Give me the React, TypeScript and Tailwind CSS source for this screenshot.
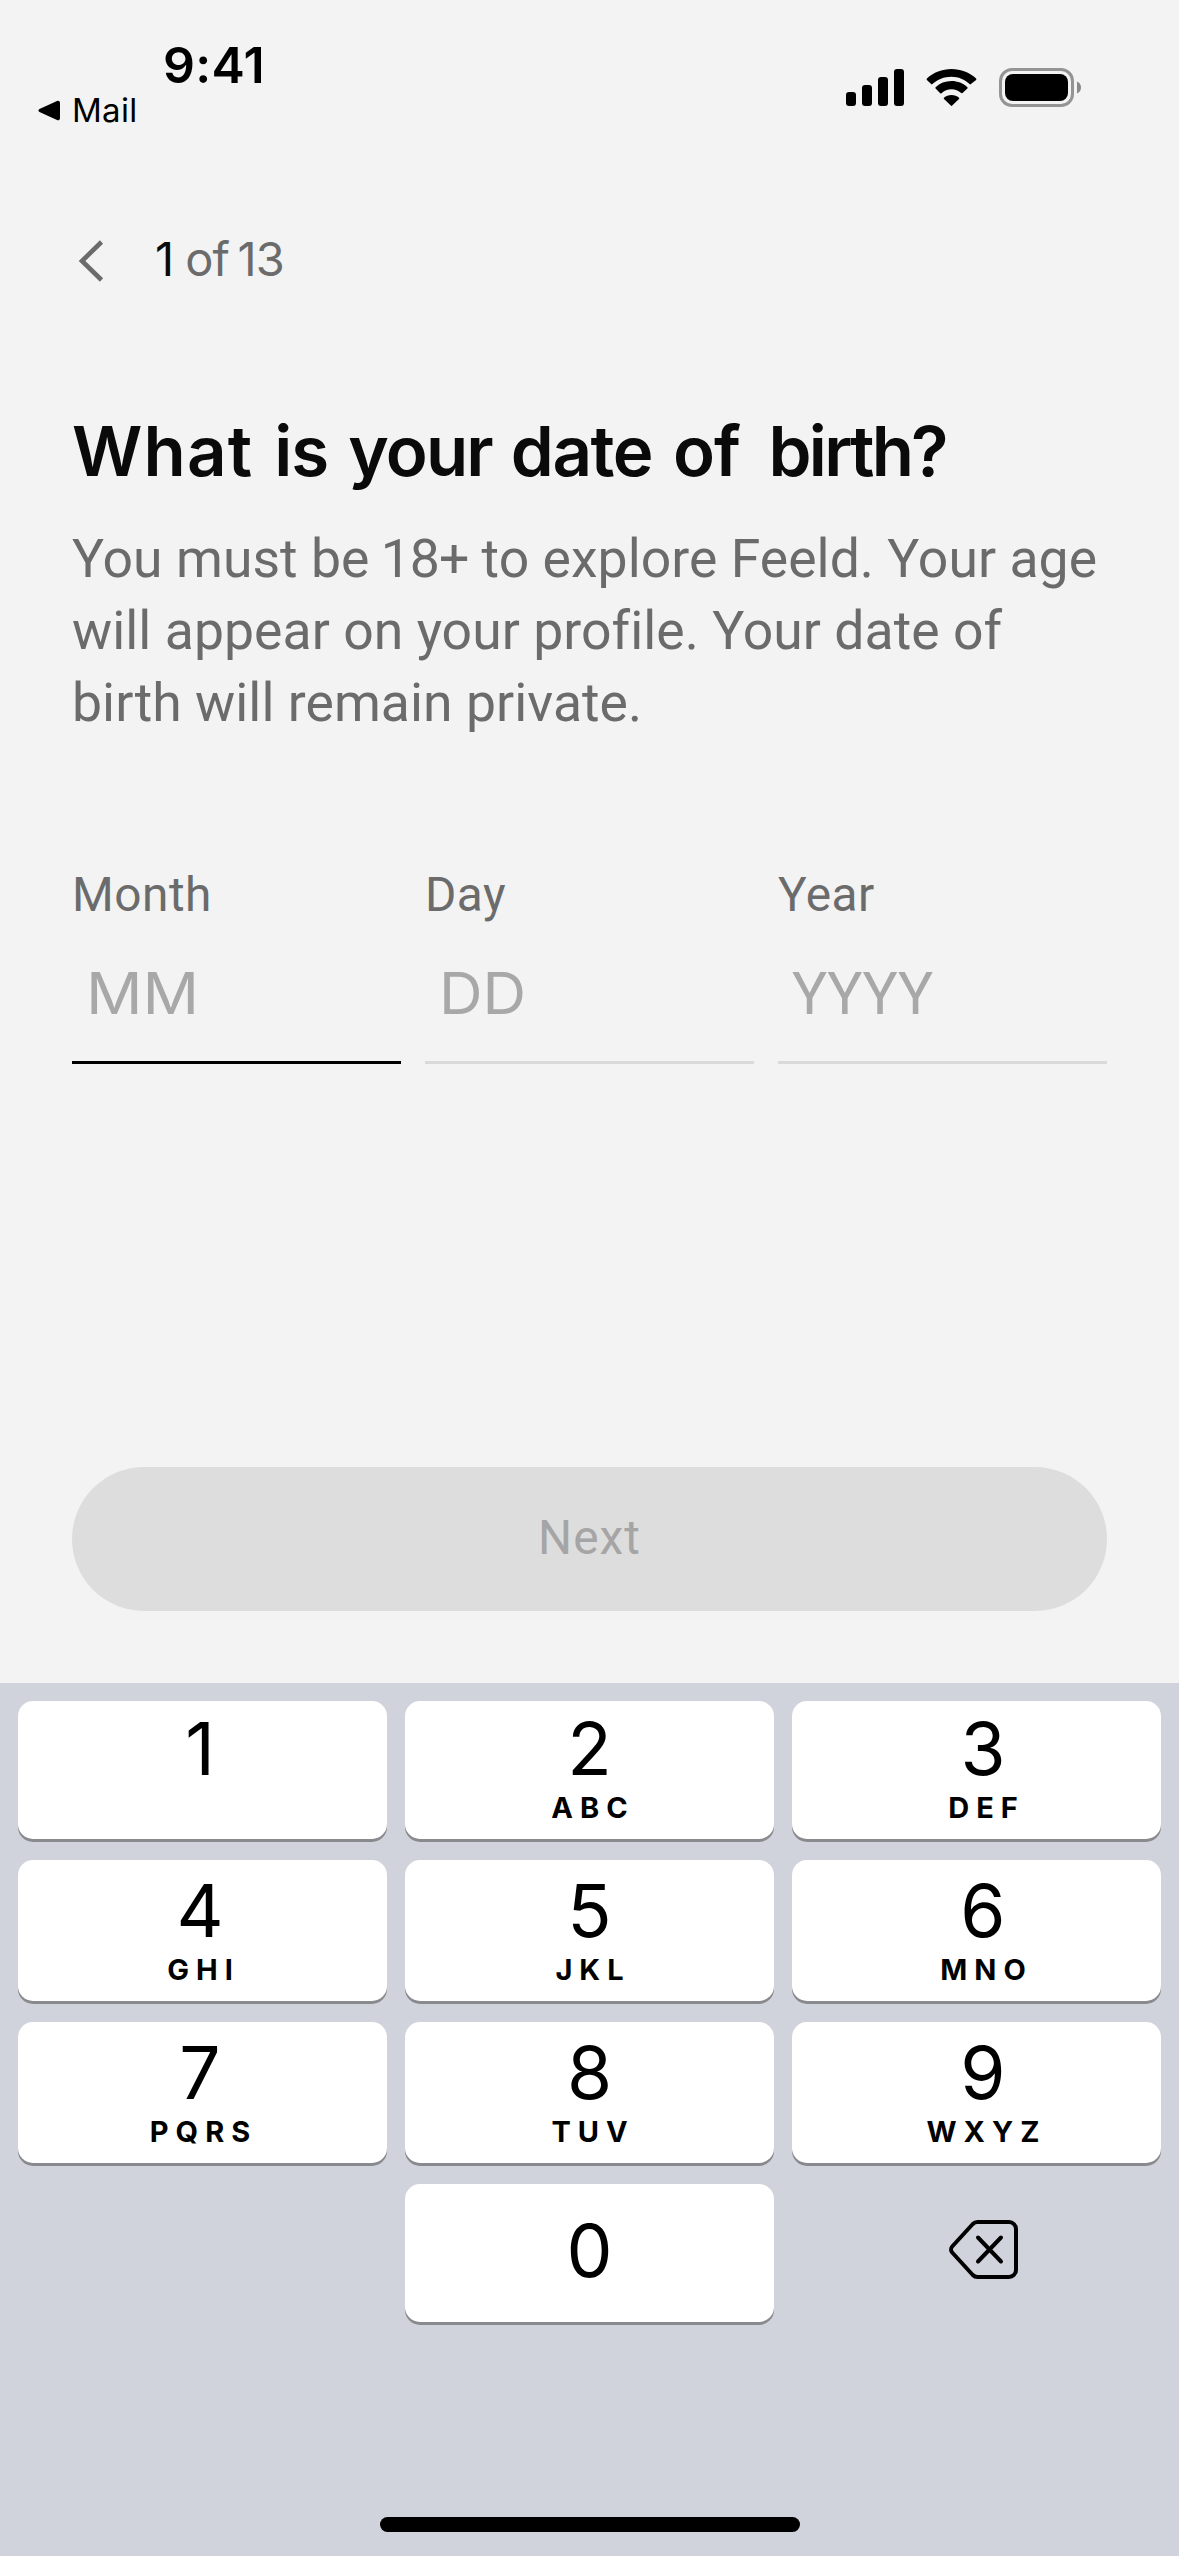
import type { ReactNode } from "react";

function SignalIcon() {
  return (
    <svg width="58" height="37" viewBox="0 0 58 37" fill="black">
      <rect x="0" y="23" width="10" height="14" rx="3" />
      <rect x="16" y="16" width="10" height="21" rx="3" />
      <rect x="32" y="8" width="10" height="29" rx="3" />
      <rect x="48" y="0" width="10" height="37" rx="3" />
    </svg>
  );
}

function WifiIcon() {
  return (
    <svg width="51" height="37" viewBox="0 0 51 37" fill="black">
      <path d="M25.500 7.700c6.900 0 13.300 2.700 18.100 7.400.4.4 1 .4 1.300 0l5.200-4.200c.4-.4.4-1 0-1.400C43.500 3.400 34.900 0 25.500 0S7.500 3.400.9 9.500c-.4.4-.4 1 0 1.400l4.200 4.200c.4.4 1 .4 1.300 0 5-4.700 11.800-7.400 19.100-7.400Z" />
      <path d="M25.500 20.300c3.700 0 7.100 1.400 9.700 3.700.4.400 1 .400 1.300 0l4.900-4.400c.4-.4.4-1 0-1.400-4.200-4-9.800-6.200-15.900-6.200s-11.700 2.200-15.900 6.200c-.4.4-.4 1 0 1.400l4.600 4.700c.4.4 1 .4 1.300 0 2.700-2.500 6.200-4 10-4Z" />
      <path d="M33 30.100c.4-.4.400-1 0-1.300-2-1.800-4.600-2.800-7.500-2.800s-5.500 1-7.500 2.800c-.4.300-.4.900 0 1.300l6.800 6.500c.4.4 1 .4 1.400 0Z" />
    </svg>
  );
}

function BatteryIcon() {
  return (
    <svg width="83" height="39" viewBox="0 0 83 39" fill="none">
      <rect x="1.500" y="1.500" width="72" height="36" rx="11.500" stroke="#949494" strokeWidth="3" />
      <rect x="6" y="6" width="63" height="27" rx="8" fill="black" />
      <path d="M78 13.500c2.500.9 4 3.200 4 6s-1.500 5.100-4 6Z" fill="#8a8a8a" />
    </svg>
  );
}

function BackspaceIcon() {
  return (
    <svg width="69" height="59" viewBox="0 0 69 59" fill="none" stroke="black" strokeWidth="4" strokeLinecap="round" strokeLinejoin="round">
      <path d="M28.500 2H60a7 7 0 0 1 7 7v41a7 7 0 0 1-7 7H28.500a6.500 6.500 0 0 1-4.700-2L3.200 32.500a4.500 4.500 0 0 1 0-6L23.800 4a6.500 6.500 0 0 1 4.700-2Z" />
      <path d="M29 17.500 52 41.500M52 17.500 29 41.500" />
    </svg>
  );
}

function StatusBar() {
  return (
    <header className="flex h-[230px] items-start font-['Inter',sans-serif] text-black">
      <div className="flex w-[846px] flex-col pt-[39px] pl-[38px]">
        <div className="pl-[125px] text-[50px] leading-[52px] font-semibold tracking-[0.3px]">9:41</div>
        <div className="flex items-center gap-[12px]">
          <svg width="22" height="21" viewBox="0 0 22 21">
            <path d="M1.500 9 19 .9c1.400-.7 3 .2 3 1.800v15.600c0 1.600-1.600 2.500-3 1.800L1.500 12C0 11.300 0 9.700 1.500 9Z" fill="black" />
          </svg>
          <span className="text-[33px] leading-[38px] tracking-[0.3px]">Mail</span>
        </div>
      </div>
      <div className="flex items-center pt-[68px]">
        <SignalIcon />
        <div className="pl-[22px]"><WifiIcon /></div>
        <div className="pl-[22px]"><BatteryIcon /></div>
      </div>
    </header>
  );
}

function Field({ label, active, children }: { label: string; active?: boolean; children: ReactNode }) {
  return (
    <div className={active ? "border-b-[3px] border-black" : "border-b-[3px] border-[#dadada]"}>
      <div className="pt-[1px] text-[47.8px] leading-[55px] tracking-[0.5px] text-[#6b6b6b]">{label}</div>
      <div className="flex h-[138px] items-center pt-[2px] text-[#a8a8a8]">{children}</div>
    </div>
  );
}

const keyRows = [
  {
    size: "h-[138px] pt-[8px]",
    keys: [["1", ""], ["2", "ABC"], ["3", "DEF"]],
  },
  {
    size: "h-[141px] pt-[11px]",
    keys: [["4", "GHI"], ["5", "JKL"], ["6", "MNO"]],
  },
  {
    size: "h-[141px] pt-[11px]",
    keys: [["7", "PQRS"], ["8", "TUV"], ["9", "WXYZ"]],
  },
];

const columnShift = ["pr-[5px]", "pr-0", "pl-[13px]"];

function Key({ digit, letters, className }: { digit: string; letters?: string; className: string }) {
  return (
    <button className={`flex flex-col items-center rounded-[15px] bg-white text-black shadow-[0_3px_0_#898a8d] ${className}`}>
      <span className="text-[73px] leading-[80px]">{digit}</span>
      {letters ? <span className="mt-[1px] pl-[7px] text-[29px] leading-[36px] font-bold tracking-[7px]">{letters}</span> : null}
    </button>
  );
}

function Keyboard() {
  return (
    <section className="flex h-[873px] flex-col bg-[#d0d3db] font-['Inter',sans-serif]">
      <div className="flex flex-col gap-[21px] px-[18px] pt-[18px]">
        {keyRows.map((row, i) => (
          <div key={i} className="grid grid-cols-3 gap-[18px]">
            {row.keys.map(([digit, letters], col) => (
              <Key key={digit} digit={digit} letters={letters} className={`${row.size} ${columnShift[col]}`} />
            ))}
          </div>
        ))}
        <div className="grid grid-cols-3 gap-[18px]">
          <div />
          <Key digit="0" className="h-[138px] pt-[27px]" />
          <button className="flex h-[138px] items-center justify-center pb-[7px] pl-[14px]">
            <BackspaceIcon />
          </button>
        </div>
      </div>
      <div className="mt-auto mb-[24px] h-[15px] w-[420px] self-center rounded-full bg-black" />
    </section>
  );
}

export default function App() {
  return (
    <div className="flex h-[2556px] w-[1179px] flex-col overflow-hidden bg-[#f3f3f3] font-['Roboto',sans-serif]">
      <StatusBar />
      <main className="flex flex-1 flex-col px-[72px]">
        <div className="flex h-[56px] items-center font-['Inter',sans-serif] text-[47px] leading-[56px] text-[#6b6b6b]">
          <svg className="mt-[6px] ml-[6px]" width="26" height="42" viewBox="0 0 26 42" fill="none" stroke="#6b6b6b" strokeWidth="4.600">
            <path d="M23.500 2 4 21l19.500 19" />
          </svg>
          <span className="mt-[1px] ml-[51px] text-[#0a0a0a]">1</span>
          <span className="mt-[1px] ml-[11px] tracking-[-0.8px] [word-spacing:-4px]">of 13</span>
        </div>
        <h1 className="mt-[123px] font-['Inter',sans-serif] text-[69px] leading-[84px] font-semibold tracking-[-1px] whitespace-nowrap text-[#0a0a0a] [word-spacing:4.500px]">
          <span className="tracking-[1.2px]">What</span> is <span className="-ml-[1px] tracking-[-1.8px]">your</span>{" "}
          <span className="-ml-[2px] tracking-[-1.5px]">date</span> of{" "}
          <span className="ml-[8px] tracking-[-2.8px]">birth?</span>
        </h1>
        <p className="mt-[30px] text-[53.5px] leading-[72px] tracking-[0.05px] whitespace-nowrap text-[#6b6b6b]">
          You must be <span className="-ml-[2px] tracking-[-1px]">18+</span> to explore Feeld. Your age
          <br />
          will appear on your profile. Your date of
          <br />
          birth will remain private.
        </p>
        <div className="mt-[128px] grid grid-cols-3 gap-[24px]">
          <Field label="Month" active>
            <span className="ml-[14px] origin-left scale-x-[1.09] font-['Inter',sans-serif] text-[57.5px]">MM</span>
          </Field>
          <Field label="Day">
            <span className="ml-[14px] origin-left scale-x-[1.05] font-['Inter',sans-serif] text-[57.5px]">DD</span>
          </Field>
          <Field label="Year">
            <span className="mt-[3px] ml-[14px] text-[58.6px] tracking-[-0.4px]">YYYY</span>
          </Field>
        </div>
        <button className="mt-auto mb-[72px] flex h-[144px] items-center justify-center rounded-full bg-[#dddddd] text-[47.8px] tracking-[1px] text-[#a5a5a5]">
          Next
        </button>
      </main>
      <Keyboard />
    </div>
  );
}
